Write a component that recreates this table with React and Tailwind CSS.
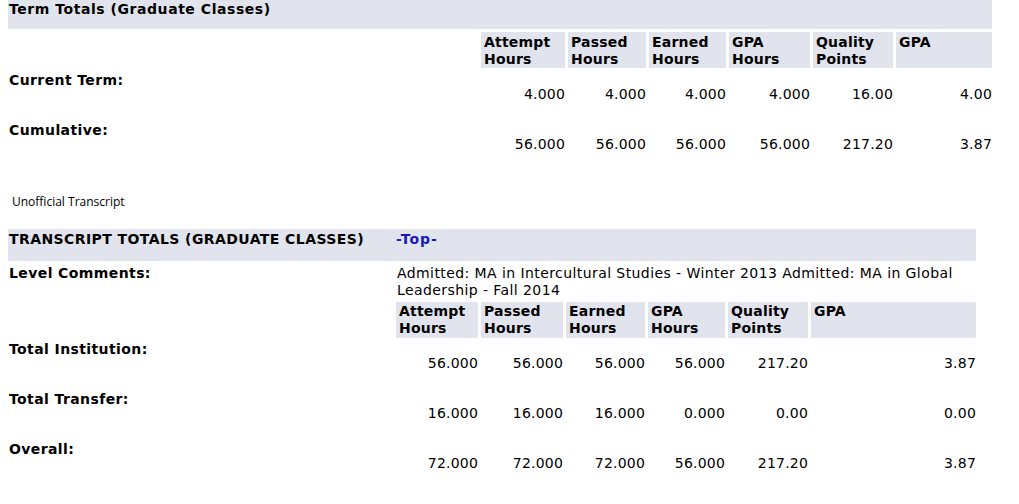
const termCols = ["Attempt Hours", "Passed Hours", "Earned Hours", "GPA Hours", "Quality Points", "GPA"];

const termRows = [
  { label: "Current Term:", values: ["4.000", "4.000", "4.000", "4.000", "16.00", "4.00"] },
  { label: "Cumulative:", values: ["56.000", "56.000", "56.000", "56.000", "217.20", "3.87"] },
];

const totalRows = [
  { label: "Total Institution:", values: ["56.000", "56.000", "56.000", "56.000", "217.20", "3.87"] },
  { label: "Total Transfer:", values: ["16.000", "16.000", "16.000", "0.000", "0.00", "0.00"] },
  { label: "Overall:", values: ["72.000", "72.000", "72.000", "56.000", "217.20", "3.87"] },
];

function HeaderCells({ top }) {
  return termCols.map((c) => {
    const [a, b] = c.split(" ");
    return (
      <div key={c} className={`bg-[#e1e4ed] h-[36px] pl-[3px] font-bold tracking-[0.2px] ${top ? "pt-[2px]" : "pt-[1px]"}`}>
        {a}
        {b && <br />}
        {b}
      </div>
    );
  });
}

function DataRows({ rows, top }) {
  return rows.map((r) => (
    <div key={r.label} className="contents">
      <div className={`h-[47px] pl-[1px] font-bold tracking-[0.4px] ${top ? "pt-[1px]" : ""}`}>{r.label}</div>
      {r.values.map((v, i) => (
        <div key={i} className={`h-[47px] text-right tracking-[0.2px] ${top ? "pt-[15px]" : "pt-[14px]"}`}>
          {v}
        </div>
      ))}
    </div>
  ));
}

export default function App() {
  return (
    <div className="bg-white min-h-screen w-[1019px] h-[504px] overflow-hidden text-black text-[14px] leading-[17px] font-['DejaVu_Sans',Verdana,sans-serif]">
      {/* Term totals */}
      <div className="ml-[8px] w-[984px] grid grid-cols-[470px_84px_78px_77px_81px_80px_96px] gap-[3px]">
        <div className="col-span-7 bg-[#e1e4ed] h-[29px] pl-[1px] pt-[1px] font-bold tracking-[0.55px]">
          Term Totals (Graduate Classes)
        </div>
        <div />
        <HeaderCells top />
        <DataRows rows={termRows} top />
      </div>

      <div className="mt-[27px] ml-[12px] text-[12px] leading-[14px] font-['Open_Sans',Arial,sans-serif]">
        Unofficial Transcript
      </div>

      {/* Transcript totals */}
      <div className="mt-[20px] ml-[8px] w-[968px] grid grid-cols-[385px_82px_82px_79px_77px_80px_165px] gap-[3px]">
        <div className="col-span-7 bg-[#e1e4ed] h-[32px] pt-[2px] flex font-bold">
          <span className="w-[388px] pl-[1px] tracking-[0.42px]">TRANSCRIPT TOTALS (GRADUATE CLASSES)</span>
          <a href="#" className="text-[#1a1ab8] tracking-[1px]">-Top-</a>
        </div>
        <div className="pl-[1px] pt-[1px] font-bold tracking-[0.4px]">Level Comments:</div>
        <div className="col-span-6 pl-[1px] pt-[1px] tracking-[0.42px]">
          Admitted: MA in Intercultural Studies - Winter 2013 Admitted: MA in Global Leadership - Fall 2014
        </div>
        <div />
        <HeaderCells />
        <DataRows rows={totalRows} />
      </div>
    </div>
  );
}
